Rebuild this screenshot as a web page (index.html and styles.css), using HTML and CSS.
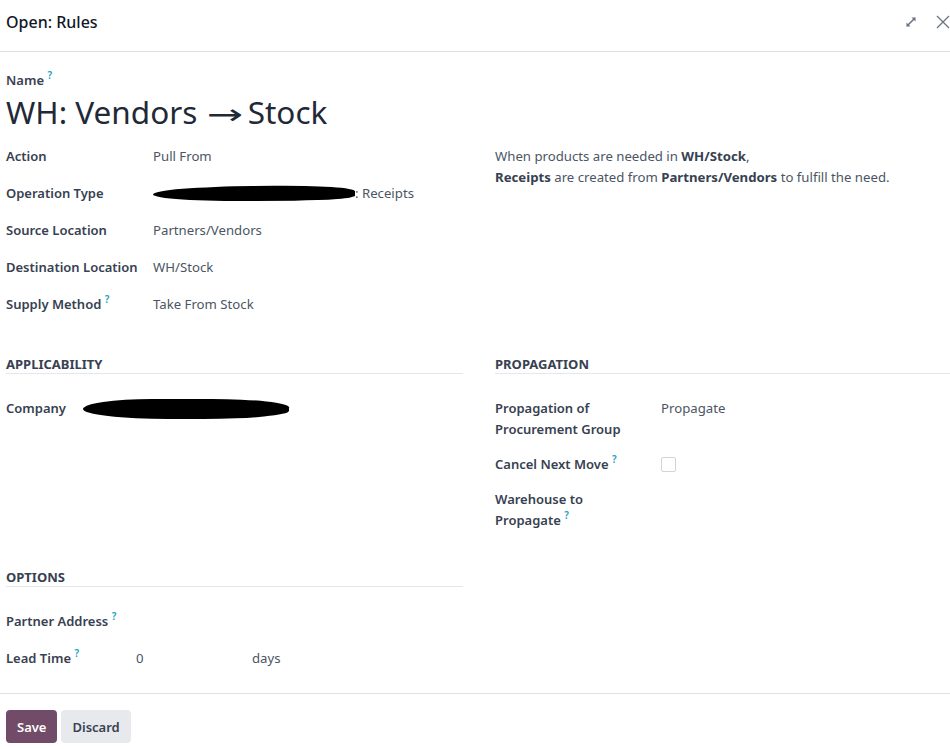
FILE: index.html
```html
<!DOCTYPE html>
<html lang="en">
<head>
    <meta charset="UTF-8">
    <meta name="viewport" content="width=device-width, initial-scale=1.0">
    <title>Open: Rules</title>
    <link rel="stylesheet" href="styles.css">
</head>
<body>
    <div class="modal-header">
        <h4 class="modal-title">Open: Rules</h4>
        <div class="header-icons">
            <svg class="icon-expand" width="14" height="14" viewBox="0 0 14 14">
                <path d="M3 11 L11 3" stroke="#6b7280" stroke-width="1.6"/>
                <path d="M7.5 2.5 H11.5 V6.5 Z" fill="#6b7280"/>
                <path d="M2.5 7.5 V11.5 H6.5 Z" fill="#6b7280"/>
            </svg>
            <svg class="icon-close" width="16" height="16" viewBox="0 0 16 16">
                <path d="M2 2 L14 14 M14 2 L2 14" stroke="#6b7280" stroke-width="1.3"/>
            </svg>
        </div>
    </div>

    <div class="sheet">
        <div class="title-block">
            <div class="field-label">Name <sup>?</sup></div>
            <h1 class="record-name">WH: Vendors <span class="arrow">→</span> Stock</h1>
        </div>

        <div class="two-cols">
            <div class="group main-group">
                <div class="row"><div class="field-label">Action</div><div class="field-value">Pull From</div></div>
                <div class="row"><div class="field-label">Operation Type</div><div class="field-value"><span class="redact redact-op"></span>: Receipts</div></div>
                <div class="row"><div class="field-label">Source Location</div><div class="field-value">Partners/Vendors</div></div>
                <div class="row"><div class="field-label">Destination Location</div><div class="field-value">WH/Stock</div></div>
                <div class="row"><div class="field-label">Supply Method <sup>?</sup></div><div class="field-value">Take From Stock</div></div>
            </div>
            <div class="rule-message">
                When products are needed in <b>WH/Stock</b>,<br>
                <b>Receipts</b> are created from <b>Partners/Vendors</b> to fulfill the need.
            </div>

            <div class="group applicability-group">
                <div class="separator">Applicability</div>
                <div class="row"><div class="field-label">Company</div><div class="field-value"><span class="redact redact-company"></span></div></div>
            </div>
            <div class="group propagation-group">
                <div class="separator">Propagation</div>
                <div class="row"><div class="field-label">Propagation of Procurement Group</div><div class="field-value">Propagate</div></div>
                <div class="row"><div class="field-label">Cancel Next Move <sup>?</sup></div><div class="field-value"><span class="checkbox"></span></div></div>
                <div class="row"><div class="field-label">Warehouse to Propagate <sup>?</sup></div><div class="field-value"></div></div>
            </div>

            <div class="group options-group">
                <div class="separator">Options</div>
                <div class="row"><div class="field-label">Partner Address <sup>?</sup></div><div class="field-value"></div></div>
                <div class="row"><div class="field-label">Lead Time <sup>?</sup></div><div class="field-value"><span class="lead-input">0</span>days</div></div>
            </div>
        </div>
    </div>

    <div class="modal-footer">
        <button class="btn btn-primary">Save</button>
        <button class="btn btn-secondary">Discard</button>
    </div>
</body>
</html>
```

FILE: styles.css
```css
body { margin: 0; padding: 0; background: #fff; font-family: "Noto Sans", "Open Sans", sans-serif; font-size: 13.2px; color: #374151; width: 950px; overflow: hidden; }
.modal-header { height: 52px; box-sizing: border-box; border-bottom: 1px solid #dee2e6; display: flex; justify-content: space-between; padding: 11px 0 0 6px; }
.modal-title { margin: 0; font-size: 16px; line-height: 22px; font-weight: 500; color: #111827; }
.header-icons { display: flex; gap: 17px; align-items: center; height: 22px; margin-right: -1px; }
.sheet { padding: 18px 0 0 6px; }
.title-block { margin-bottom: 6px; }
.field-label { font-weight: 600; font-size: 13px; color: #374151; line-height: 21px; }
sup { color: #1a9fc2; font-size: 10px; font-weight: 600; vertical-align: 6px; line-height: 0; }
.record-name { margin: 1px 0 0; font-size: 31.5px; line-height: 40px; height: 40px; font-weight: 400; color: #1f2937; }
.arrow { display: inline-block; width: 34px; margin: 0 -2px 0 2px; text-align: center; font-family: "DejaVu Sans", sans-serif; font-size: 28px; line-height: 1; transform: scaleX(1.55); }
.two-cols { display: grid; grid-template-columns: 457px 1fr; column-gap: 32px; }
.row { display: flex; align-items: flex-start; padding: 8px 0; }
.field-value { color: #4b5563; line-height: 21px; min-height: 21px; display: flex; align-items: center; }
.main-group .field-label { width: 147px; flex-shrink: 0; }
.rule-message { padding-top: 8px; line-height: 21px; color: #4b5563; }
.rule-message b { color: #374151; font-weight: 700; }
.separator { margin-top: 32px; margin-bottom: 16px; font-size: 13px; font-weight: 700; text-transform: uppercase; line-height: 18px; border-bottom: 1px solid #e5e7eb; color: #374151; }
.applicability-group .field-label { width: 77px; flex-shrink: 0; }
.propagation-group .field-label { width: 150px; margin-right: 16px; flex-shrink: 0; }
.propagation-group .row { padding: 8px 0 6px; }
.options-group { grid-column: 1; }
.options-group .separator { margin-top: 31px; }
.options-group .field-label { width: 130px; flex-shrink: 0; }
.lead-input { width: 116px; }
.redact { display: inline-block; background: #000; }
.redact-op { width: 202px; height: 15px; border-radius: 50% 40% 30% 50%; transform: rotate(-0.5deg); }
.redact-company { width: 206px; height: 20px; border-radius: 40% 45% 50% 50% / 60% 50% 50% 60%; }
.checkbox { display: inline-block; width: 13px; height: 13px; border: 1px solid #d1d5db; border-radius: 2px; }
.modal-footer { margin-top: 16px; border-top: 1px solid #dee2e6; padding: 16px 0 0 6px; display: flex; gap: 4px; }
.btn { font-family: inherit; font-size: 13px; font-weight: 600; border: none; border-radius: 4px; height: 33px; padding: 0 11px; cursor: pointer; }
.btn-primary { background: #714b67; color: #fff; }
.btn-secondary { background: #e7e9ed; color: #374151; }
```
